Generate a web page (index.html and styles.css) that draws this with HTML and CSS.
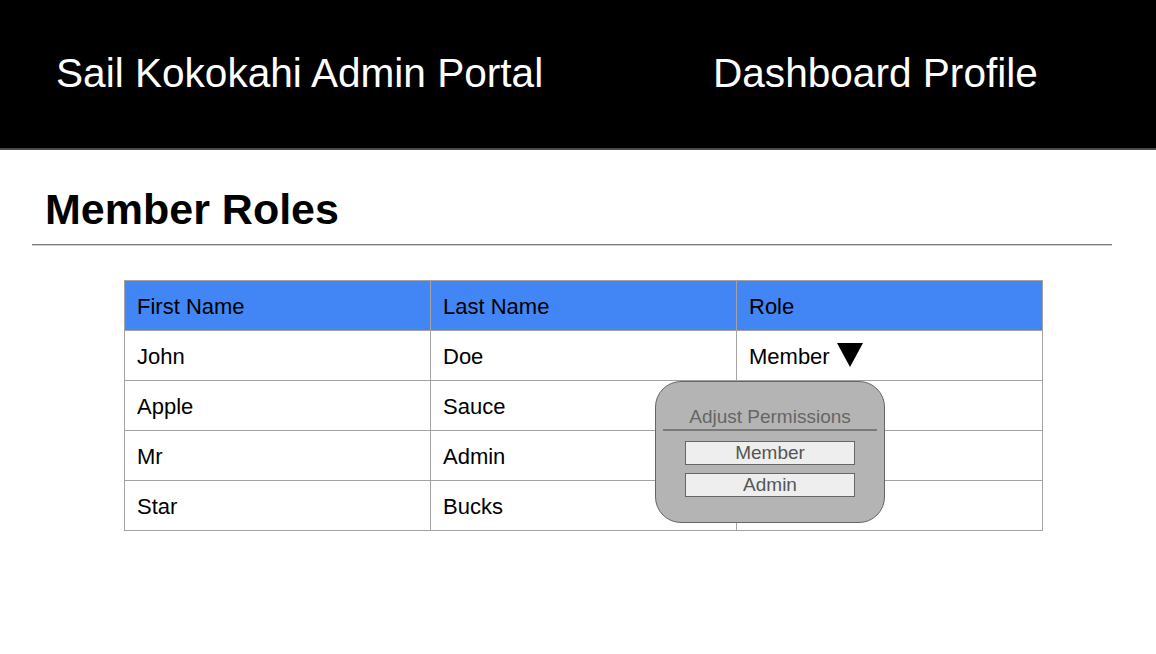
FILE: index.html
```html
<!DOCTYPE html>
<html lang="en">
<head>
<meta charset="utf-8">
<title>Sail Kokokahi Admin Portal</title>
<link rel="stylesheet" href="styles.css">
</head>
<body>
<header class="topbar">
  <div class="brand">Sail Kokokahi Admin Portal</div>
  <nav class="nav"><span>Dashboard</span> <span>Profile</span></nav>
</header>
<main class="content">
  <h1 class="page-title">Member Roles</h1>
  <hr class="rule">
  <div class="table-wrap">
    <table class="roles">
      <thead>
        <tr><th>First Name</th><th>Last Name</th><th>Role</th></tr>
      </thead>
      <tbody>
        <tr><td>John</td><td>Doe</td><td><span class="role">Member<svg class="caret" width="26" height="24" viewBox="0 0 26 24"><polygon points="0,0 26,0 13,24" fill="#000"/></svg></span></td></tr>
        <tr><td>Apple</td><td>Sauce</td><td></td></tr>
        <tr><td>Mr</td><td>Admin</td><td></td></tr>
        <tr><td>Star</td><td>Bucks</td><td></td></tr>
      </tbody>
    </table>
    <div class="perm-popup">
      <div class="perm-title">Adjust Permissions</div>
      <div class="perm-divider"></div>
      <button class="perm-btn">Member</button>
      <button class="perm-btn">Admin</button>
    </div>
  </div>
</main>
</body>
</html>
```

FILE: styles.css
```css
* { box-sizing: border-box; }
html, body {
  margin: 0;
  padding: 0;
  background: #fff;
  font-family: "Liberation Sans", Arial, sans-serif;
  color: #000;
}
.topbar {
  height: 150px;
  background: #000;
  border-bottom: 2px solid #4a4a4a;
  display: flex;
  align-items: flex-start;
  padding: 50px 0 0 56px;
  color: #fff;
  font-size: 40.6px;
  line-height: 46px;
}
.brand {
  width: 657px;
  flex: none;
}
.nav {
  white-space: nowrap;
}
.content {
  padding: 0 44px 0 32px;
}
.page-title {
  margin: 34px 0 0 13px;
  font-size: 43px;
  font-weight: bold;
  line-height: 50px;
}
.rule {
  margin: 10px 0 0 0;
  border: 0;
  border-top: 1px solid #7a7a7a;
  border-bottom: 1px solid #d0d0d0;
  height: 0;
}
.table-wrap {
  position: relative;
  margin: 34px 0 0 92px;
  width: 919px;
}
.roles {
  width: 919px;
  table-layout: fixed;
  border-collapse: collapse;
  font-size: 22px;
}
.roles th, .roles td {
  border: 1px solid #a3a3a3;
  height: 50px;
  padding: 2px 12px 0;
  text-align: left;
  vertical-align: middle;
  font-weight: normal;
}
.roles thead th {
  background: #4285f4;
}
.role {
  display: inline-flex;
  align-items: center;
}
.caret {
  margin-left: 7px;
  margin-top: -4px;
}
.perm-popup {
  position: absolute;
  left: 531px;
  top: 101px;
  width: 230px;
  height: 142px;
  background: #b4b4b4;
  border: 1px solid #666;
  border-radius: 26px;
  padding: 23px 7px 0;
  display: flex;
  flex-direction: column;
  align-items: center;
}
.perm-title {
  font-size: 19px;
  line-height: 24px;
  color: #666;
}
.perm-divider {
  align-self: stretch;
  border-top: 2px solid #7a7a7a;
  margin: 0 0 10px;
}
.perm-btn {
  width: 170px;
  height: 24px;
  margin: 0 0 8px;
  padding: 0;
  background: #eee;
  border: 1px solid #666;
  border-radius: 0;
  font-family: "Liberation Sans", Arial, sans-serif;
  font-size: 19px;
  line-height: 22px;
  color: #555;
}
```
